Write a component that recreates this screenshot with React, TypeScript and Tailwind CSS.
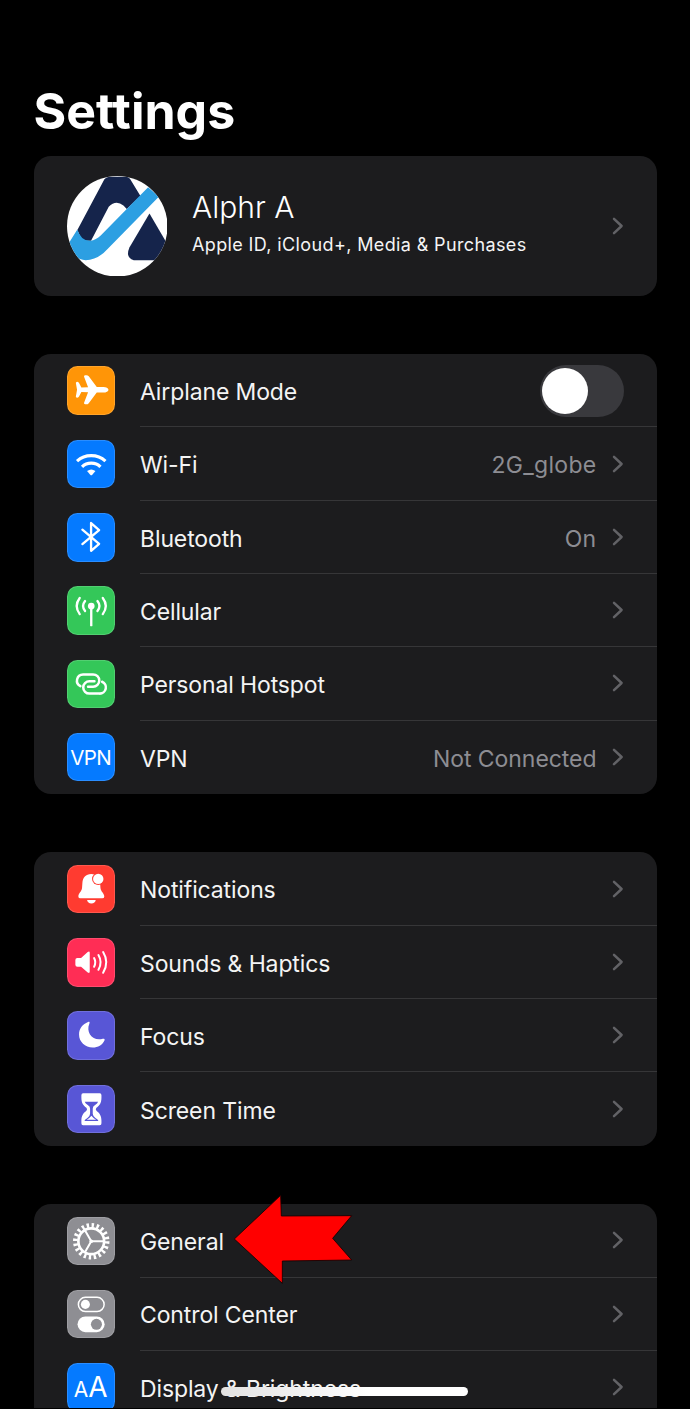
import type { ReactNode } from "react";

function Chevron() {
  return (
    <svg viewBox="0 0 12 18" className="h-[18px] w-3 shrink-0" fill="none" stroke="#626266" strokeWidth="2.5" strokeLinecap="round" strokeLinejoin="round">
      <path d="M2 1.8 9.6 9 2 16.2" />
    </svg>
  );
}

function Tile({ color, children }: { color: string; children?: ReactNode }) {
  return (
    <div className={`h-[48.5px] w-[48.5px] shrink-0 overflow-hidden rounded-[10.5px] ring-1 ring-white/15 ring-inset ${color}`}>
      <svg viewBox="0 0 145 145" className="h-full w-full" fill="none" stroke="none" strokeLinecap="round" strokeLinejoin="round">
        {children}
      </svg>
    </div>
  );
}

const W = "#fff";

const AirplaneIcon = (
  <Tile color="bg-[#ff9507]">
    <path fill={W} d="M124 71C124 66 117 62.500 109 62.500H89L65 31Q62 27.500 58 27.500H54Q50 28 51 32L63 63.500 43 64 36 51Q33 47 29 47.500 26 48 26.500 51L30 71 26.500 91Q26 94 29 94.500 33 95 36 91L43 78 63 78.500 51 110Q50 114 54 114.500H58Q62 114.500 65 111L89 79.500H109C117 79.500 124 76 124 71Z" />
  </Tile>
);
const WifiIcon = (
  <Tile color="bg-[#057aff]">
    <g stroke={W} strokeWidth="9.500" strokeLinecap="butt">
      <path d="M30 63Q48 46.500 72.500 46.500T115 63" />
      <path d="M45 80Q56 69 72.500 69T100 80" />
    </g>
    <path fill={W} d="M60 93Q72.500 83 85 93L75 104.500Q72.500 107 70 104.500Z" />
  </Tile>
);
const BluetoothIcon = (
  <Tile color="bg-[#057aff]">
    <path stroke={W} strokeWidth="7" d="M46 50 96 92 72 113V30L96 51 46 93" />
  </Tile>
);
const CellularIcon = (
  <Tile color="bg-[#34c759]">
    <circle cx="72.500" cy="60" r="10" fill={W} />
    <g stroke={W} strokeWidth="7">
      <path d="M72.500 62V117" />
      <path d="M54 45Q42 60 54 75M91 45Q103 60 91 75" />
      <path d="M38 36Q20 60 38 84M107 36Q125 60 107 84" />
    </g>
  </Tile>
);
const HotspotIcon = (
  <Tile color="bg-[#34c759]">
    <g stroke={W} strokeWidth="7.500">
      <path d="M40 78A18.500 18.500 0 0 1 48 43H78A18.500 18.500 0 0 1 78 80H63" />
      <path d="M105 65A18.500 18.500 0 0 1 97 100.500H67A18.500 18.500 0 0 1 67 63.500H82" />
    </g>
  </Tile>
);
const VpnIcon = (
  <div className="flex h-[48.5px] w-[48.5px] shrink-0 items-center justify-center rounded-[10.5px] bg-[#057aff] pt-[2px] text-[20.5px] leading-none tracking-[-0.6px] ring-1 ring-white/15 ring-inset">
    VPN
  </div>
);
const BellIcon = (
  <Tile color="bg-[#ff3b30]">
    <path fill={W} d="M72.500 27C56 27 47 38 46 54L45 68C44 80 34 84 34 94Q34 99.500 40 99.500H105Q111.500 99.500 111.500 94C111 84 101 80 100 68L99 54C97 36 88 27 72.500 27Z" />
    <path fill={W} d="M60 105H86Q84 115 73 115T60 105Z" />
    <circle cx="93.500" cy="41.500" r="18.500" fill="#ff3b30" />
    <circle cx="93.500" cy="41.500" r="15.500" fill={W} />
  </Tile>
);
const SoundIcon = (
  <Tile color="bg-[#ff2d55]">
    <path fill={W} d="M31 60H42L62 42Q68 38 68 45V100Q68 107 62 103L42 86H31Q25 86 25 80V66Q25 60 31 60Z" />
    <g stroke={W} strokeWidth="6">
      <path d="M81 60Q88 73 81 86" />
      <path d="M94 51Q107 73 94 95" />
      <path d="M108 42Q127 73 108 104" />
    </g>
  </Tile>
);
const MoonIcon = (
  <Tile color="bg-[#5856d6]">
    <path fill={W} d="M63 33C66 31 69 33 67 37C55 64 78 92 107 83C111 82 114 84 112 88C106 101 93 109 77 109C54 109 36 92 36 70C36 53 47 39 63 33Z" />
  </Tile>
);
const HourglassIcon = (
  <Tile color="bg-[#5856d6]">
    <path fill={W} d="M48 25H98Q103 25 103 31V38C103 54 97 61 88 68Q84 72 88 77C97 84 103 91 103 107V114Q103 120 98 120H48Q43 120 43 114V107C43 91 49 84 58 77Q62 72 58 68C49 61 43 54 43 38V31Q43 25 48 25Z" />
    <path fill="#5856d6" d="M53 50H93Q91 56 84 60 77 64 77 70V86Q78 95 85 99 93 103 94 108H52Q53 103 61 99 68 95 69 86V70Q69 64 62 60 55 56 53 50Z" />
    <path fill={W} d="M59 104Q66 101 73 92 80 101 87 104Z" />
  </Tile>
);
const GearIcon = (
  <Tile color="bg-[#8e8e93]">
    <g stroke={W}>
      <circle cx="72.500" cy="72.500" r="38.500" strokeWidth="8" />
      <circle cx="72.500" cy="72.500" r="47.500" strokeWidth="14" strokeLinecap="butt" pathLength="200" strokeDasharray="4.8 5.2" />
      <path strokeWidth="6" d="M72.500 72.500H109M72.500 72.500 54 40.500M72.500 72.500 54 104.500" />
    </g>
    <circle cx="72.500" cy="72.500" r="5.500" fill={W} />
  </Tile>
);
const ControlIcon = (
  <Tile color="bg-[#8e8e93]">
    <rect x="34" y="22" width="77" height="42" rx="21" stroke={W} strokeWidth="4.500" />
    <circle cx="55" cy="43" r="13.500" fill={W} />
    <rect x="31.500" y="79" width="81" height="47" rx="23.500" fill={W} />
    <circle cx="88" cy="102.500" r="16.500" fill="#8e8e93" />
  </Tile>
);
const DisplayIcon = (
  <div className="flex h-[48.5px] w-[48.5px] shrink-0 items-baseline justify-center rounded-[10.5px] bg-[#057aff] pt-[7px] leading-[34px] ring-1 ring-white/15 ring-inset">
    <span className="text-[21px]">A</span>
    <span className="text-[28px]">A</span>
  </div>
);

interface RowProps {
  icon: ReactNode;
  label: string;
  value?: string;
  valueTracking?: string;
  control?: ReactNode;
  last?: boolean;
}

function Row({ icon, label, value, valueTracking = "tracking-[0.3px]", control, last }: RowProps) {
  return (
    <div className="flex h-[73.3px] gap-[25px] pl-[33px]">
      <div className="flex items-center">{icon}</div>
      <div className={`flex flex-1 items-center pr-[33px] ${last ? "" : "border-b border-[#363638]"}`}>
        <span className="flex-1 pt-[4px] text-[23px] tracking-[-0.12px] whitespace-nowrap text-[#f4f4f4]">{label}</span>
        {value && <span className={`pt-[4px] pr-[15px] text-[23px] text-[#8d8d93] ${valueTracking}`}>{value}</span>}
        {control ?? <Chevron />}
      </div>
    </div>
  );
}

function Toggle() {
  return (
    <div className="mt-px h-[52px] w-[84px] rounded-full bg-[#39393d] p-[3px] pl-[2px]">
      <div className="h-[46px] w-[46px] rounded-full bg-white" />
    </div>
  );
}

function Group({ children }: { children: ReactNode }) {
  return <section className="rounded-[17px] bg-[#1c1c1e]">{children}</section>;
}

function Avatar() {
  return (
    <svg viewBox="0 0 301 301" className="h-[100.5px] w-[100.5px] shrink-0">
      <clipPath id="avatar">
        <circle cx="150.500" cy="150.500" r="150.500" />
      </clipPath>
      <g clipPath="url(#avatar)">
        <rect width="301" height="301" fill="#fff" />
        <path fill="#15244b" d="M112 10Q117 2 128 2H178Q184 2 189 9L220 60 179 99 169 88Q146 71 125 92L72 194H45L31 162Z" />
        <path fill="#15244b" d="M247 112 310 220 290 252H200Q174 245 187 214Z" />
        <path fill="#2c9fe2" d="M31 160Q42 195 70 194 87 191 101 178L243 34 275 62 123 217Q92 252 56 252 20 250 0 210Z" />
      </g>
    </svg>
  );
}

export default function App() {
  return (
    <div className="relative h-[1409px] w-[690px] overflow-hidden bg-black font-['Inter',sans-serif] text-white">
      <main className="flex flex-col gap-[58.6px] pr-[33.5px] pl-[33.5px]">
        <div>
          <h1 className="pt-[80px] text-[50px] leading-[62px] font-bold">Settings</h1>
          <section className="mt-[14px] flex h-[139.5px] items-center rounded-[17px] bg-[#1c1c1e] pr-[33px] pl-[33px]">
            <Avatar />
            <div className="flex flex-1 flex-col pt-[3px] pl-[25px]">
              <span className="text-[30px] leading-[34px] font-[350]">Alphr A</span>
              <span className="text-[18px] leading-[41px] tracking-[0.37px] text-[#f4f4f4]">Apple ID, iCloud+, Media &amp; Purchases</span>
            </div>
            <Chevron />
          </section>
        </div>
        <Group>
          <Row icon={AirplaneIcon} label="Airplane Mode" control={<Toggle />} />
          <Row icon={WifiIcon} label="Wi-Fi" value="2G_globe" />
          <Row icon={BluetoothIcon} label="Bluetooth" value="On" />
          <Row icon={CellularIcon} label="Cellular" />
          <Row icon={HotspotIcon} label="Personal Hotspot" />
          <Row icon={VpnIcon} label="VPN" value="Not Connected" valueTracking="tracking-[-0.05px]" last />
        </Group>
        <Group>
          <Row icon={BellIcon} label="Notifications" />
          <Row icon={SoundIcon} label="Sounds & Haptics" />
          <Row icon={MoonIcon} label="Focus" />
          <Row icon={HourglassIcon} label="Screen Time" last />
        </Group>
        <Group>
          <Row icon={GearIcon} label="General" />
          <Row icon={ControlIcon} label="Control Center" />
          <Row icon={DisplayIcon} label="Display & Brightness" last />
        </Group>
      </main>
      <svg viewBox="540 -15 375 288" className="absolute top-[1190px] left-[230px] h-[96px] w-[125px]">
        <path d="M553 132 692 1 694 63 905 62 848 130 905 195 697 198 697 265Z" fill="#ff0000" stroke="#120000" strokeWidth="2.500" />
      </svg>
      <div className="absolute top-[1387px] left-[221px] h-[9px] w-[247px] rounded-full bg-gradient-to-r from-[#e2e2e2] to-white to-60%" />
      <div className="absolute bottom-0 left-0 h-px w-full bg-black" />
    </div>
  );
}
